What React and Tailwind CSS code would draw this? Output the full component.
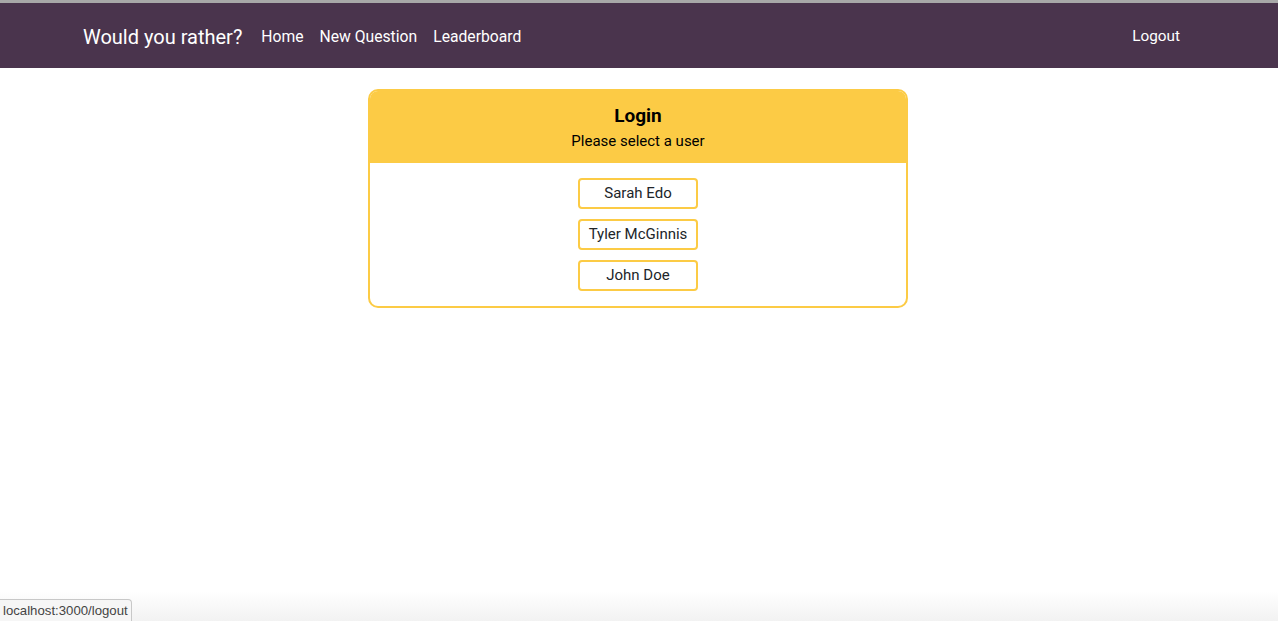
import React from "react";

export default function App() {
  const users = ["Sarah Edo", "Tyler McGinnis", "John Doe"];
  return (
    <div className="relative min-h-[621px] w-full bg-white text-[#212529]" style={{ fontFamily: "Roboto, 'Noto Sans', sans-serif" }}>
      <div className="h-[3px] bg-[#a8a8a8]" />
      <nav className="flex h-[65px] items-center justify-between bg-[#4a344d] pl-[83px] pr-[98px] text-white">
        <div className="flex items-center pt-[2px]">
          <span className="mr-[19px] text-[20px] leading-none">Would you rather?</span>
          <div className="flex items-center gap-[16px] text-[15.7px] leading-none">
            <span>Home</span>
            <span>New Question</span>
            <span>Leaderboard</span>
          </div>
        </div>
        <span className="pt-[2px] text-[15.3px] leading-none">Logout</span>
      </nav>
      <div className="flex justify-center pt-[21px] pr-[2px]">
        <div className="w-[540px] overflow-hidden rounded-[10px] border-2 border-[#fccb45]">
          <div className="flex h-[72px] flex-col items-center justify-center bg-[#fccb45] text-black">
            <h2 className="text-[19px] font-bold leading-none">Login</h2>
            <p className="mt-[9px] text-[15px] leading-none">Please select a user</p>
          </div>
          <div className="flex flex-col items-center gap-[10px] pb-[15px] pt-[15px]">
            {users.map((u) => (
              <button key={u} className="flex h-[31px] w-[120px] items-center justify-center rounded-[4px] border-2 border-[#fccb45] bg-white text-[15px] text-[#212529]">
                {u}
              </button>
            ))}
          </div>
        </div>
      </div>
      <div className="pointer-events-none absolute bottom-0 left-0 right-0 h-[30px] bg-gradient-to-t from-[#f2f2f2] to-white/0" />
      <div className="absolute bottom-0 left-0 rounded-tr-[4px] border border-l-0 border-b-0 border-[#c8c8c8] bg-[#f6f6f6] px-[3px] py-[1px] text-[13.2px] leading-[19px] text-[#444]" style={{ fontFamily: "'Liberation Sans', Arial, sans-serif" }}>
        localhost:3000/logout
      </div>
    </div>
  );
}
